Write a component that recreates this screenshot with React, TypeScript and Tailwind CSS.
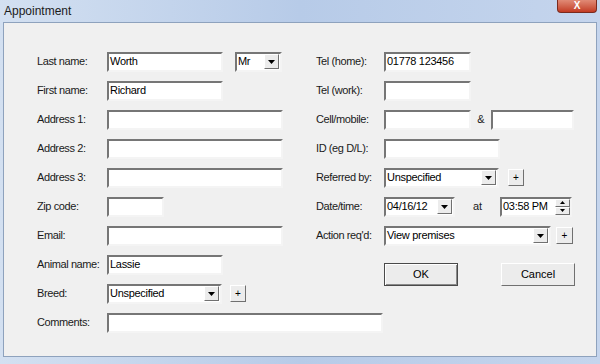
import React from 'react';

const FONT = { fontFamily: '"Liberation Sans", Arial, sans-serif' };

const sunken =
  'bg-white border-2 border-t-[#767676] border-l-[#767676] border-b-[#f4f4f4] border-r-[#f4f4f4]';
const raised =
  'bg-[#ececec] border border-t-white border-l-white border-b-[#707070] border-r-[#707070]';

const Arrow: React.FC<{ up?: boolean; small?: boolean }> = ({ up, small }) => (
  <svg
    width={small ? 5 : 7}
    height={small ? 3 : 4}
    viewBox="0 0 7 4"
    className={up ? 'rotate-180' : ''}
  >
    <path d="M0 0h7L3.5 4z" fill="#000" />
  </svg>
);

const Field: React.FC<{ w: string; value?: string }> = ({ w, value }) => (
  <div className={`${w} h-[20px] ${sunken} flex items-center pl-[1px] text-[11px] tracking-[-0.3px] text-black leading-none`}>
    {value}
  </div>
);

const Combo: React.FC<{ w: string; value?: string }> = ({ w, value }) => (
  <div className={`${w} h-[20px] ${sunken} flex items-center text-[11px] tracking-[-0.3px] text-black leading-none`}>
    <span className="flex-1 pl-[1px] truncate">{value}</span>
    <div className={`w-[15px] h-[15px] mr-[1px] ${raised} flex items-center justify-center`}>
      <Arrow />
    </div>
  </div>
);

const Plus: React.FC<{ w?: string }> = ({ w = 'w-[16px]' }) => (
  <div className={`${w} h-[17px] ${raised} flex items-center justify-center text-[10px] leading-none text-black`}>
    +
  </div>
);

const Row: React.FC<{ label: string; lw: string; children?: React.ReactNode }> = ({ label, lw, children }) => (
  <div className="h-[29px] flex items-center">
    <div className={`${lw} shrink-0 text-[11px] tracking-[-0.4px] text-[#1a1a1a]`}>{label}</div>
    {children}
  </div>
);

export default function App() {
  return (
    <div
      className="w-[600px] h-[364px] flex flex-col bg-gradient-to-r from-[#d3e0f1] via-[#b7cbe8] to-[#c5d5ed] overflow-hidden"
      style={FONT}
    >
      <div className="h-[22px] shrink-0 flex items-start justify-between">
        <span className="pl-[4px] pt-[2px] text-[12px] text-[#1b1b1b]">Appointment</span>
        <div className="mr-[3px] w-[40px] h-[13px] rounded-b-[4px] bg-gradient-to-b from-[#e08a76] to-[#c23a22] border border-[#7a2a1e] border-t-0 flex items-center justify-center">
          <span className="text-white text-[10px] font-bold leading-none">X</span>
        </div>
      </div>

      <div className="mx-[3px] h-[335px] shrink-0 bg-[#f0f0f0] border border-[#8ea2bd] pt-[24px]">
        <div className="flex">
          <div className="w-[279px] ml-[33px]">
            <Row label="Last name:" lw="w-[70px]">
              <Field w="w-[116px]" value="Worth" />
              <div className="ml-[12px]">
                <Combo w="w-[47px]" value="Mr" />
              </div>
            </Row>
            <Row label="First name:" lw="w-[70px]">
              <Field w="w-[116px]" value="Richard" />
            </Row>
            <Row label="Address 1:" lw="w-[70px]">
              <Field w="w-[176px]" />
            </Row>
            <Row label="Address 2:" lw="w-[70px]">
              <Field w="w-[176px]" />
            </Row>
            <Row label="Address 3:" lw="w-[70px]">
              <Field w="w-[176px]" />
            </Row>
            <Row label="Zip code:" lw="w-[70px]">
              <Field w="w-[57px]" />
            </Row>
            <Row label="Email:" lw="w-[70px]">
              <Field w="w-[176px]" />
            </Row>
            <Row label="Animal name:" lw="w-[70px]">
              <Field w="w-[116px]" value="Lassie" />
            </Row>
            <Row label="Breed:" lw="w-[70px]">
              <Combo w="w-[115px]" value="Unspecified" />
              <div className="ml-[8px]">
                <Plus />
              </div>
            </Row>
          </div>

          <div className="flex-1">
            <Row label="Tel (home):" lw="w-[68px]">
              <Field w="w-[87px]" value="01778 123456" />
            </Row>
            <Row label="Tel (work):" lw="w-[68px]">
              <Field w="w-[87px]" />
            </Row>
            <Row label="Cell/mobile:" lw="w-[68px]">
              <Field w="w-[87px]" />
              <span className="w-[20px] text-center text-[11px] text-[#1a1a1a]">&amp;</span>
              <Field w="w-[83px]" />
            </Row>
            <Row label="ID (eg D/L):" lw="w-[68px]">
              <Field w="w-[116px]" />
            </Row>
            <Row label="Referred by:" lw="w-[68px]">
              <Combo w="w-[115px]" value="Unspecified" />
              <div className="ml-[9px]">
                <Plus />
              </div>
            </Row>
            <Row label="Date/time:" lw="w-[68px]">
              <Combo w="w-[71px]" value="04/16/12" />
              <span className="w-[45px] text-center text-[11px] text-[#1a1a1a]">at</span>
              <div className={`w-[72px] h-[20px] ${sunken} flex items-center text-[11px] tracking-[-0.3px] text-black leading-none`}>
                <span className="flex-1 pl-[1px]">03:58 PM</span>
                <div className="w-[15px] h-[16px] flex flex-col">
                  <div className={`flex-1 ${raised} flex items-center justify-center`}>
                    <Arrow up small />
                  </div>
                  <div className={`flex-1 ${raised} flex items-center justify-center`}>
                    <Arrow small />
                  </div>
                </div>
              </div>
            </Row>
            <Row label="Action req'd:" lw="w-[68px]">
              <Combo w="w-[167px]" value="View premises" />
              <div className="ml-[5px]">
                <Plus w="w-[17px]" />
              </div>
            </Row>
            <div className="mt-[13px] pl-[68px] flex gap-[43px]">
              <div className="w-[74px] h-[23px] bg-[#ececec] border border-[#4a4a4a] flex items-center justify-center text-[11px] text-black shadow-[inset_1px_1px_0_#fff,inset_-1px_-1px_0_#8a8a8a]">
                OK
              </div>
              <div className={`w-[74px] h-[23px] ${raised} flex items-center justify-center text-[11px] text-black`}>
                Cancel
              </div>
            </div>
          </div>
        </div>
        <div className="ml-[33px]">
          <Row label="Comments:" lw="w-[70px]">
            <Field w="w-[276px]" />
          </Row>
        </div>
      </div>
    </div>
  );
}
